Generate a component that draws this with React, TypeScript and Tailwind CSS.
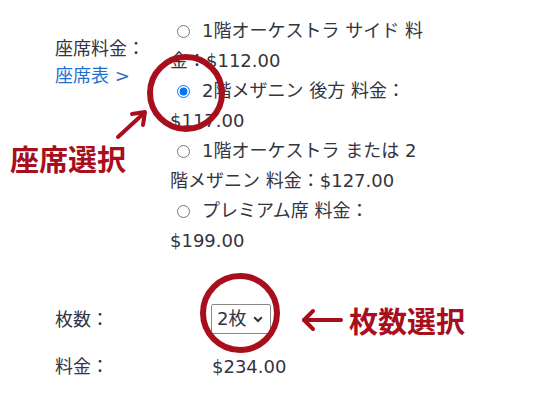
import React from 'react';

const options = [
  { first: '1階オーケストラ サイド 料', rest: '金：$112.00', checked: false },
  { first: '2階メザニン 後方 料金：', rest: '$117.00', checked: true },
  { first: '1階オーケストラ または 2', rest: '階メザニン 料金：$127.00', checked: false },
  { first: 'プレミアム席 料金：', rest: '$199.00', checked: false },
];

export default function App() {
  return (
    <div
      className="relative w-[535px] h-[400px] overflow-hidden bg-white text-[18px] text-[#343440]"
      style={{ fontFamily: '"DejaVu Sans", "Noto Sans CJK JP", sans-serif' }}
    >
      <div className="pt-4 pl-[55px]">
        {/* seat row */}
        <div className="flex">
          <div className="w-[115px] pt-[19px] leading-[27px]">
            <div>座席料金：</div>
            <a className="text-[#1f6fd1]">座席表 &gt;</a>
          </div>
          <div className="leading-[30px] whitespace-nowrap">
            {options.map((o, i) => (
              <label key={i} className="block">
                <input
                  type="radio"
                  name="seat"
                  defaultChecked={o.checked}
                  className="ml-[7px] mr-[12px] w-[13px] h-[13px] align-[-1px] accent-[#0a74f0]"
                />
                {o.first}
                <br />
                {o.rest}
              </label>
            ))}
          </div>
        </div>

        {/* count row */}
        <div className="flex items-center mt-[48px] h-[30px]">
          <div className="w-[156px]">枚数：</div>
          <div className="relative">
            <select
              defaultValue="2"
              className="appearance-none w-[60px] h-[30px] border border-[#8a8a8a] rounded-[2px] bg-white pl-[5px] text-[18px] leading-[28px] text-[#343440] outline-none"
            >
              <option value="1">1枚</option>
              <option value="2">2枚</option>
              <option value="3">3枚</option>
            </select>
            <svg
              className="pointer-events-none absolute right-[8px] top-[12px]"
              width="10"
              height="7"
              viewBox="0 0 10 7"
            >
              <path d="M1.2 1.3 L5 5 L8.8 1.3" fill="none" stroke="#333" strokeWidth="2" />
            </svg>
          </div>
        </div>

        {/* price row */}
        <div className="flex items-center mt-[17px] h-[30px]">
          <div className="w-[157px]">料金：</div>
          <div>$234.00</div>
        </div>
      </div>

      {/* annotations */}
      <svg className="pointer-events-none absolute left-0 top-0" width="535" height="400">
        <circle cx="186" cy="93" r="36" fill="none" stroke="#a80f1d" strokeWidth="6" />
        <circle cx="240" cy="313" r="37" fill="none" stroke="#a80f1d" strokeWidth="6" />
        <path d="M118 137 L143 114" stroke="#a80f1d" strokeWidth="4" strokeLinecap="round" />
        <path d="M132 114 L145 112 L143 125" fill="none" stroke="#a80f1d" strokeWidth="4" strokeLinecap="round" strokeLinejoin="round" />
        <path d="M304 320 L341 320" stroke="#a80f1d" strokeWidth="4" strokeLinecap="round" />
        <path d="M313 311 L304 320 L313 329" fill="none" stroke="#a80f1d" strokeWidth="4" strokeLinecap="round" strokeLinejoin="round" />
      </svg>
      <div
        className="absolute left-[10px] top-[140px] text-[29px] leading-[36px] font-bold text-[#a80f1d]"
        style={{ fontFamily: '"Noto Sans CJK JP", sans-serif' }}
      >
        座席選択
      </div>
      <div
        className="absolute left-[349px] top-[302px] text-[29px] leading-[36px] font-bold text-[#a80f1d]"
        style={{ fontFamily: '"Noto Sans CJK JP", sans-serif' }}
      >
        枚数選択
      </div>
    </div>
  );
}
